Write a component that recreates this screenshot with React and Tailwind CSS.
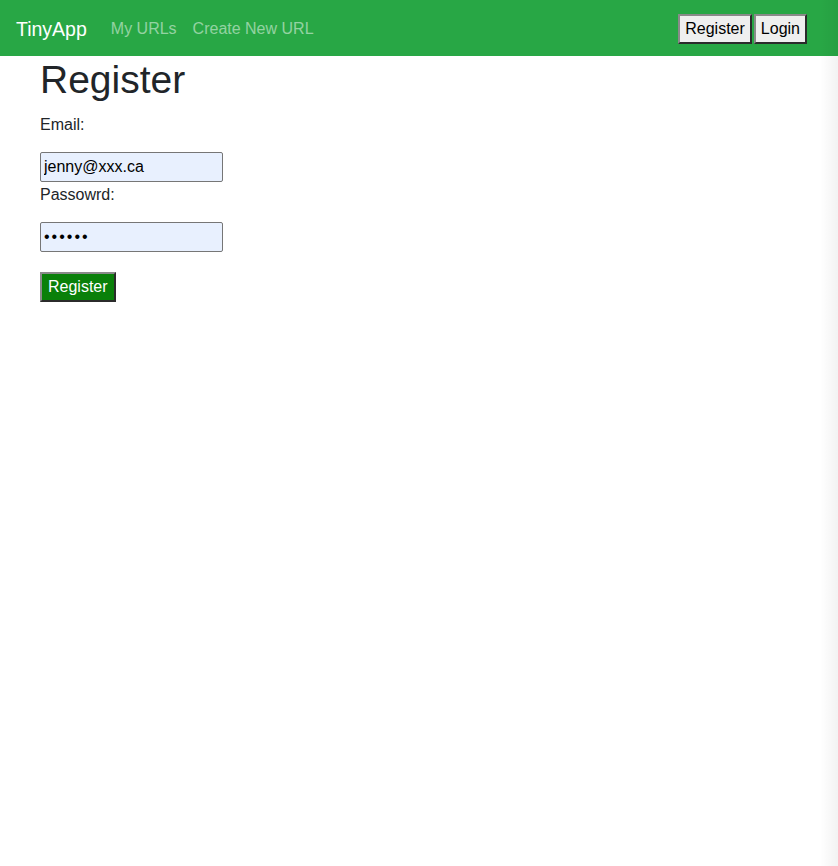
import { useState } from 'react'

const outset =
  'border-2 border-solid border-t-[#8a8a8a] border-l-[#8a8a8a] border-r-[#2b2b2b] border-b-[#2b2b2b]'

const Navbar = () => (
  <nav className="h-14 bg-[#28a745] flex items-center justify-between pl-4 pr-[31px]">
    <div className="flex items-center pt-[2px]">
      <a href="#" className="text-white text-[19.5px] leading-[30px] mr-4">TinyApp</a>
      <a href="#" className="text-white/50 text-base px-2 leading-6">My URLs</a>
      <a href="#" className="text-white/50 text-base px-2 leading-6">Create New URL</a>
    </div>
    <div className="flex items-center gap-[2px] pt-[1px]">
      <button className={`bg-[#efefef] text-black text-base leading-[18px] px-[5px] py-1 ${outset}`}>Register</button>
      <button className={`bg-[#efefef] text-black text-base leading-[18px] px-[5px] py-1 ${outset}`}>Login</button>
    </div>
  </nav>
)

export default function App() {
  const [email, setEmail] = useState('jenny@xxx.ca')
  const [password, setPassword] = useState('123456')

  return (
    <div className="min-h-[866px] bg-white text-[#212529] relative" style={{ fontFamily: '"Liberation Sans", Arial, sans-serif' }}>
      <Navbar />
      <main className="px-10">
        <h1 className="text-[39px] leading-[48px] mb-2">Register</h1>
        <form className="flex flex-col items-start" onSubmit={(e) => e.preventDefault()}>
          <label className="text-base leading-6 pt-[1px] mb-[15px]">Email:</label>
          <input
            type="email"
            value={email}
            onChange={(e) => setEmail(e.target.value)}
            className="w-[183px] h-[30px] bg-[#e8f0fe] border border-[#767676] rounded-[2px] px-[3px] text-base text-black outline-none"
          />
          <label className="text-base leading-6 pt-[1px] mb-[15px]">Passowrd:</label>
          <input
            type="password"
            value={password}
            onChange={(e) => setPassword(e.target.value)}
            className="w-[183px] h-[30px] bg-[#e8f0fe] border border-[#767676] rounded-[2px] px-[3px] text-base text-black tracking-[2px] outline-none"
          />
          <button type="submit" className={`mt-5 bg-[#0a800a] text-white text-base leading-[18px] px-[6px] py-1 ${outset}`}>
            Register
          </button>
        </form>
      </main>
      <div className="pointer-events-none absolute top-0 right-0 h-full w-[18px] bg-gradient-to-r from-transparent to-black/5" />
    </div>
  )
}
